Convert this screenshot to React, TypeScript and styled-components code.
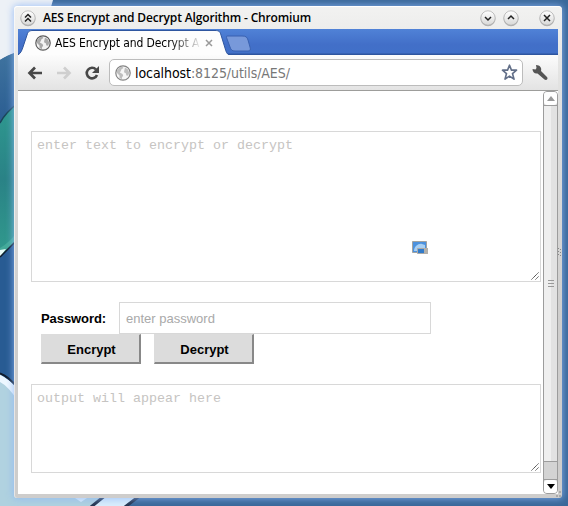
import React from 'react';
import styled, { createGlobalStyle } from 'styled-components';

const Global = createGlobalStyle`
  * { box-sizing: border-box; }
  body { margin: 0; overflow: hidden; }
`;

const Desktop = styled.div`
  position: relative;
  width: 568px;
  height: 506px;
  padding: 6px 6px 8px 14px;
  overflow: hidden;
  background: #3a6899;
`;
const Wallpaper = styled.svg`
  position: absolute;
  inset: 0;
`;
const Window = styled.div`
  position: relative;
  height: 492px;
  width: 548px;
  display: flex;
  flex-direction: column;
  padding: 0 4px 4px;
  border-radius: 4px 4px 3px 3px;
  background: linear-gradient(#f2f2f1 0, #e3e3e2 70px, #cecdcc 320px);
  box-shadow: inset 0 1px #fff, inset 1px 0 rgba(255,255,255,.5), 0 0 7px 1px rgba(140,182,245,.75);
`;
const TitleBar = styled.div`
  height: 23px;
  flex: none;
  display: flex;
  align-items: center;
  padding: 0 3px 0 2px;
  gap: 7px;
`;
const Title = styled.div`
  flex: 1;
  font: 600 12px/22px "Open Sans", sans-serif;
  letter-spacing: -.15px;
  color: #000;
  white-space: nowrap;
`;
const RoundIcon = styled.svg<{ $gap?: number }>`
  width: 16px;
  height: 18px;
  flex: none;
  margin-left: ${p => p.$gap ?? 0}px;
`;
const TabStrip = styled.div`
  height: 26px;
  flex: none;
  position: relative;
  background: linear-gradient(#5082d7, #426fc8 60%, #4170c8 24px, #2e559f 25px);
`;
const TabShape = styled.svg`
  position: absolute;
  left: 0;
  top: 0;
`;
const TabLabel = styled.div`
  position: relative;
  display: flex;
  align-items: center;
  height: 28px;
  padding-left: 17px;
  gap: 4px;
`;
const TabText = styled.div`
  width: 146px;
  white-space: nowrap;
  font: 12px/20px "DejaVu Sans Condensed", "DejaVu Sans", sans-serif;
  font-stretch: condensed;
  letter-spacing: -.1px;
  color: #000;
  mask-image: linear-gradient(90deg, #000 115px, transparent 147px);
`;
const Toolbar = styled.div`
  height: 36px;
  flex: none;
  display: flex;
  align-items: center;
  padding-left: 8px;
  background: linear-gradient(#fcfcfc, #e3e3e3);
  border-bottom: 1px solid #9d9d9b;
`;
const NavIcons = styled.svg`
  width: 83px;
  height: 26px;
  flex: none;
`;
const Address = styled.div`
  width: 414px;
  height: 27px;
  display: flex;
  align-items: center;
  padding: 0 4px 0 5px;
  gap: 4px;
  background: #fff;
  border: 1px solid #bcbcbc;
  border-radius: 5px;
`;
const Url = styled.div`
  flex: 1;
  font: 14px/22px "DejaVu Sans Condensed", "DejaVu Sans", sans-serif;
  font-stretch: condensed;
  letter-spacing: -.07px;
  color: #777;
  white-space: nowrap;
  b { color: #000; font-weight: 400; }
`;
const Wrench = styled.svg`
  margin-left: 9px;
`;
const View = styled.div`
  display: flex;
  height: 403px;
  background: #fff;
`;
const Page = styled.div`
  flex: 1;
  padding: 40px 2px 0 13px;
  font-family: "Liberation Sans", Arial, sans-serif;
`;
const Area = styled.div<{ $height: number }>`
  position: relative;
  height: ${p => p.$height}px;
  border: 1px solid #d8d8d8;
  padding: 5px 5px;
  font: 13.33px/17px "Liberation Mono", monospace;
  color: #c6c4c2;
`;
const Grip = styled.svg`
  position: absolute;
  right: 1px;
  bottom: 1px;
`;
const DragImage = styled.svg`
  position: absolute;
  left: 380px;
  top: 108px;
`;
const Form = styled.div`
  padding: 20px 10px;
`;
const Field = styled.div`
  display: flex;
  align-items: center;
  height: 32px;
`;
const Label = styled.label`
  width: 78px;
  font-size: 13px;
  font-weight: 700;
  letter-spacing: -.08px;
`;
const Password = styled.div`
  width: 312px;
  height: 32px;
  border: 1px solid #d8d8d8;
  padding-left: 6px;
  font-size: 13px;
  line-height: 31px;
  color: #a9a9a9;
`;
const Buttons = styled.div`
  display: flex;
  gap: 13px;
`;
const Button = styled.button`
  width: 100px;
  height: 30px;
  padding: 1px 0 0 2px;
  border: 2px solid;
  border-color: #dcdcdc #888 #888 #dcdcdc;
  border-left-width: 1px;
  border-top-width: 1px;
  background: #dcdcdc;
  color: #000;
  font: 700 13px "Liberation Sans", Arial, sans-serif;
`;
const Scrollbar = styled.div`
  width: 15px;
  height: 403px;
  display: flex;
  flex-direction: column;
  border: 1px solid #9c9c9c;
  border-radius: 4px;
  background: #d3d3d3;
`;
const Arrow = styled.div`
  height: 13px;
  flex: none;
  display: grid;
  place-items: center;
  background: #fff;
  border-radius: 3px;
`;
const Thumb = styled.div`
  height: 357px;
  display: grid;
  place-items: center;
  border: solid #9c9c9c;
  border-width: 1px 0;
  background: linear-gradient(90deg, #efefef 7px, #e2e2e2 7px);
`;
const Spacer = styled.div`
  flex: 1;
  border-bottom: 1px solid #9c9c9c;
`;
const FrameGrip = styled.svg`
  position: absolute;
  right: 0;
  bottom: 0;
`;

const RoundButton = ({ d, gap }: { d: string; gap?: number }) => (
  <RoundIcon viewBox="0 0 16 18" $gap={gap}>
    <circle cx="8" cy="9.8" r="7.4" fill="#8a8a8a" opacity=".6" />
    <circle cx="8" cy="9" r="7.2" fill="url(#knob)" stroke="#aaa" strokeWidth=".7" />
    <path d={d} fill="none" stroke="#222" strokeWidth="1.5" />
  </RoundIcon>
);

const Globe = ({ faded }: { faded?: boolean }) => (
  <svg width="16" height="16" viewBox="0 0 16 16" opacity={faded ? 0.75 : 1}>
    <circle cx="8" cy="8" r="7.2" fill="#f3f3f3" stroke="#5a5a5a" strokeWidth="1.2" />
    <path d="M2 5.500 4.500 2.300 7.500 1.800 8.500 3 6.500 4.200 5.800 6 4.800 7.500 7.500 9 8.200 10.500 7 12.500 6.800 14.200 4.500 13 4.500 10.500 2 8zM10 2.600l3 2 1.200 3.200-1 3-1.800-.4-.6-2.200-1.800-1 .4-2.200z" fill="#a9a9a9" />
  </svg>
);

const ResizeGrip = () => (
  <Grip width="8" height="8" viewBox="0 0 8 8">
    <path d="M.5 7.5l7-7M4.5 7.5l3-3" stroke="#444" strokeDasharray="1.4 .3" fill="none" />
  </Grip>
);

export default function App() {
  return (
    <Desktop>
      <Global />
      <Wallpaper width="568" height="506">
        <defs>
          <linearGradient id="knob" x2="0" y2="1"><stop stopColor="#fff" /><stop offset="1" stopColor="#d8d8d7" /></linearGradient>
          <linearGradient id="sky" x2="0" y2="1"><stop stopColor="#3f739f" /><stop offset="1" stopColor="#2a5c91" /></linearGradient>
          <linearGradient id="teal" x2="0" y2="1"><stop stopColor="#2f9a90" /><stop offset=".5" stopColor="#2a8286" /><stop offset="1" stopColor="#319a8d" /></linearGradient>
        </defs>
        <path d="M0 0h53Q50 12 46 22L14 53Q8 55 0 60z" fill="#edf1f6" />
        <path d="M0 60Q7 55 18 53V105L0 125z" fill="url(#sky)" />
        <path d="M0 124Q5 113 18 103V242L0 255z" fill="url(#teal)" />
        <path d="M0 123Q5 113 18 103" fill="none" stroke="#1b4558" strokeWidth="1.500" />
        <path d="M0 248Q9 243 18 231v9L0 258z" fill="#43aa99" />
        <path d="M0 250l6-1-6 8z" fill="#e9faf7" />
        <path d="M0 257 18 239V398L0 376z" fill="#285b93" />
        <path d="M0 257 18 239" stroke="#101c2b" strokeWidth="1.500" />
        <path d="M0 374 18 388V506H0z" fill="#b1d2e0" />
        <path d="M0 375Q10 379 18 390v11Q8 386 0 382z" fill="#edf7ff" />
        <path d="M0 373.500Q8 376 18 388" fill="none" stroke="#101b2b" strokeWidth="2" />
        <path d="M0 490h144l-18 16H0z" fill="#afd1df" />
        <path d="M104 494h36l-14 12H93z" fill="#d8edfc" />
        <path d="M75 498h12l-6 4z" fill="#dcedfa" />
        <path d="M91 507 107 494M125 507l17-13" stroke="#23344f" strokeWidth="3" />
      </Wallpaper>
      <Window>
        <TitleBar>
          <RoundButton d="M5 8.5l3-3 3 3M5 12.5l3-3 3 3" />
          <Title>AES Encrypt and Decrypt Algorithm - Chromium</Title>
          <RoundButton d="M5 8l3 3 3-3" />
          <RoundButton d="M5 10l3-3 3 3" />
          <RoundButton d="M5 6l6 6M11 6l-6 6" gap={13} />
        </TitleBar>
        <TabStrip>
          <TabShape width="240" height="26">
            <path d="M0 26c3-2 4-5 5-8L9 6c1-4 3-4.500 6-4.500H197c4 0 5 1 6 4.500l4 13c1 4 2 6 4 7z" fill="#fdfdfd" />
            <path d="M0 26c3-2 4-5 5-8L9 6c1-4 3-4.500 6-4.500H197c4 0 5 1 6 4.500l4 13c1 4 2 6 4 7" fill="none" stroke="#2f569f" />
            <path d="M209 7h15c4 0 5 1 6 4l2 7c1 3 0 4-2 4h-13c-3 0-4-1-5-4l-3-8c-.7-2-.7-3 0-3z" fill="#7899da" stroke="#3961b0" />
          </TabShape>
          <TabLabel>
            <Globe />
            <TabText>AES Encrypt and Decrypt A</TabText>
            <svg width="8" height="8"><path d="M1 1l6 6M7 1L1 7" stroke="#999" strokeWidth="1.500" /></svg>
          </TabLabel>
        </TabStrip>
        <Toolbar>
          <NavIcons viewBox="0 0 83 26">
            <path d="M16 13H4M9 7.500 3.500 13 9 18.500" fill="none" stroke="#484848" strokeWidth="2.700" />
            <path d="M31 13h12M38 7.500 43.500 13 38 18.500" fill="none" stroke="#cfcfcf" strokeWidth="2.700" />
            <path d="M70 9.500A5.300 5.300 0 1 0 71 15" fill="none" stroke="#484848" strokeWidth="2.600" />
            <path d="M73 6v7h-7z" fill="#484848" />
          </NavIcons>
          <Address>
            <Globe faded />
            <Url><b>localhost</b>:8125/utils/AES/</Url>
            <svg width="17" height="17" viewBox="0 0 17 17"><path d="M8.500 1.200l2 5h5l-4 3.400 1.500 5.500-4.500-3-4.500 3 1.500-5.500-4-3.400h5z" fill="none" stroke="#626f88" strokeWidth="1.700" strokeLinejoin="round" /></svg>
          </Address>
          <Wrench width="17" height="17" viewBox="0 0 17 17">
            <path d="M4 1l.5 3-1 1.500L.5 5c0 3 2 5 5 4.500l7 6c2 1.500 4-1 2.500-2.500L9 7c1-3-1-6-5-6z" fill="#555" />
          </Wrench>
        </Toolbar>
        <View>
          <Page>
            <Area $height={151}>
              enter text to encrypt or decrypt
              <DragImage width="17" height="16">
                <path d="M.5 1.500h14v11H.5z" fill="#4b91de" stroke="#a3a3a0" />
                <path d="M2 11C2 6 7 3 10 4l3 1v6z" fill="#a9d0f3" />
                <path d="M5.500 8.500h10v5h-10z" fill="#327bc9" stroke="#aaa" />
                <path d="M12 8h4v6h-4z" fill="#b3b0aa" />
              </DragImage>
              <ResizeGrip />
            </Area>
            <Form>
              <Field><Label>Password:</Label><Password>enter password</Password></Field>
              <Buttons><Button>Encrypt</Button><Button>Decrypt</Button></Buttons>
            </Form>
            <Area $height={89}>output will appear here<ResizeGrip /></Area>
          </Page>
          <Scrollbar>
            <Arrow><svg width="8" height="5"><path d="M0 5l4-5 4 5z" fill="#999" /></svg></Arrow>
            <Thumb><svg width="6" height="8"><path d="M0 .5h6M0 3.500h6M0 6.500h6" stroke="#999" /></svg></Thumb>
            <Spacer />
            <Arrow><svg width="8" height="5"><path d="M0 0h8L4 5z" fill="#000" /></svg></Arrow>
          </Scrollbar>
        </View>
        <FrameGrip width="7" height="252">
          <path d="M3.500 2v8M5.500 3v7" stroke="#888" strokeDasharray="1 2" />
          <path d="M1 250h2M4 246h2M4 250h2" stroke="#aaa" strokeWidth="2" />
        </FrameGrip>
      </Window>
    </Desktop>
  );
}
